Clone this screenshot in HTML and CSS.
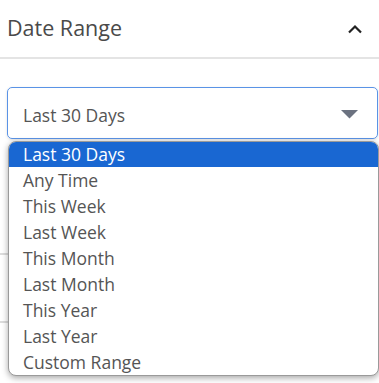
FILE: index.html
```html
<!DOCTYPE html>
<html>
<head>
<meta charset="utf-8">
<link rel="stylesheet" href="styles.css">
</head>
<body>
<div class="panel">
  <div class="header">
    <span class="title">Date Range</span>
    <svg class="chev" width="16" height="10" viewBox="0 0 16 10"><path d="M2 8.5 L8 2.5 L14 8.5" fill="none" stroke="#222" stroke-width="2.2"/></svg>
  </div>
  <div class="body">
    <div class="select">
      <span class="value">Last 30 Days</span>
      <svg class="caret" width="17" height="9" viewBox="0 0 17 9"><path d="M0 0 H17 L8.5 8.5 Z" fill="#6b7280"/></svg>
    </div>
    <div class="below">
      <div class="row"></div>
      <div class="row"></div>
      <div class="row"></div>
    </div>
    <ul class="menu">
      <li class="opt active">Last 30 Days</li>
      <li class="opt">Any Time</li>
      <li class="opt">This Week</li>
      <li class="opt">Last Week</li>
      <li class="opt">This Month</li>
      <li class="opt">Last Month</li>
      <li class="opt">This Year</li>
      <li class="opt">Last Year</li>
      <li class="opt">Custom Range</li>
    </ul>
  </div>
</div>
</body>
</html>
```
FILE: styles.css
```css
html, body {
  margin: 0;
  padding: 0;
  background: #fff;
  font-family: "Open Sans", "Noto Sans", sans-serif;
}
.panel {
  width: 379px;
  height: 383px;
  overflow: hidden;
}
.header {
  height: 57px;
  display: flex;
  align-items: center;
  justify-content: space-between;
  padding: 0 16px 0 7px;
  border-bottom: 2px solid #e4e4e4;
}
.title {
  font-size: 21.5px;
  color: #4a4a4a;
  position: relative;
  top: -1px;
}
.chev {
  display: block;
}
.body {
  position: relative;
  padding: 28px 1px 0 7px;
}
.select {
  height: 47px;
  box-sizing: content-box;
  border: 1px solid #5a93e6;
  border-radius: 5px;
  display: flex;
  align-items: center;
  justify-content: space-between;
  padding: 3px 19px 0 15px;
  box-shadow: 0 1px 3px rgba(0,0,0,0.12);
}
.value {
  font-size: 17.5px;
  color: #555;
}
.caret {
  display: block;
}
.below {
  padding-top: 48px;
}
.row {
  height: 66px;
  border-bottom: 2px solid #dcdcdc;
  margin-left: -7px;
}
.menu {
  position: absolute;
  top: 82px;
  left: 8px;
  width: 369px;
  margin: 0;
  padding: 0;
  list-style: none;
  background: #fff;
  border: 1px solid #9a9a9a;
  border-radius: 8px;
  overflow: hidden;
  box-shadow: 0 2px 6px rgba(0,0,0,0.35);
}
.opt {
  height: 26px;
  line-height: 26px;
  padding-left: 14px;
  font-size: 17.5px;
  color: #555;
}
.opt.active {
  background: #1967d2;
  color: #fff;
  height: 25px;
  line-height: 25px;
}
```
